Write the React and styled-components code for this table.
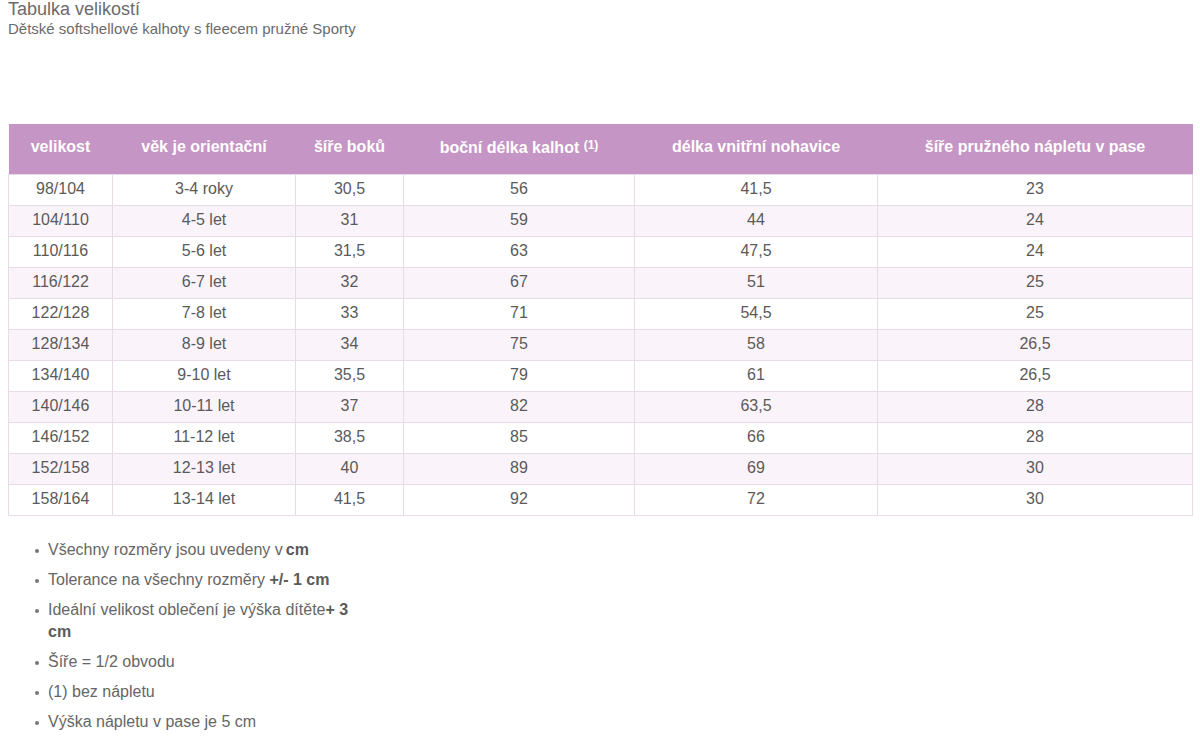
import { createGlobalStyle, styled } from "styled-components";

const GlobalStyle = createGlobalStyle`
  body {
    margin: 0;
    padding: 0 8px;
    background: #fff;
    font-family: "Liberation Sans", Arial, sans-serif;
    color: #666;
  }
`;

const Title = styled.h2({
  margin: 0,
  fontSize: "18px",
  fontWeight: "normal",
  lineHeight: "18px",
  color: "#6b6b6b",
});

const Subtitle = styled.p({
  margin: "2px 0 0",
  fontSize: "15px",
  lineHeight: "17px",
  color: "#6b6b6b",
});

const Table = styled.table({
  marginTop: "87px",
  width: "1184px",
  borderCollapse: "collapse",
  tableLayout: "fixed",
  fontSize: "16px",
  color: "#5a5a5a",
});

const Th = styled.th({
  height: "50px",
  padding: "0 0 3px",
  background: "#c595c5",
  color: "#fff",
  fontWeight: "bold",
  textAlign: "center",
  boxSizing: "border-box",
});

const Sup = styled.sup({
  fontSize: "12px",
  verticalAlign: "4px",
  fontWeight: "bold",
});

const Row = styled.tr`
  background: ${(p) => (p.$odd ? "#faf3fa" : "#fff")};
`;

const Td = styled.td({
  height: "31px",
  padding: "0 0 1px",
  textAlign: "center",
  border: "1px solid #e8dbe8",
  boxSizing: "border-box",
});

const Notes = styled.ul({
  margin: "23px 0 0",
  paddingLeft: "40px",
  width: "312px",
  fontSize: "16px",
  lineHeight: "22px",
  color: "#666",
  listStyle: "none",
});

const Note = styled.li`
  position: relative;
  margin-bottom: 8px;
  &::before {
    content: "";
    position: absolute;
    left: -13px;
    top: 10px;
    width: 4px;
    height: 4px;
    border-radius: 50%;
    background: #777;
  }
  b {
    color: #5a5a5a;
  }
`;

const Unit = styled.b({
  marginLeft: "3px",
});

const widths = [104, 183, 108, 231, 243, 315];

const rows = [
  ["98/104", "3-4 roky", "30,5", "56", "41,5", "23"],
  ["104/110", "4-5 let", "31", "59", "44", "24"],
  ["110/116", "5-6 let", "31,5", "63", "47,5", "24"],
  ["116/122", "6-7 let", "32", "67", "51", "25"],
  ["122/128", "7-8 let", "33", "71", "54,5", "25"],
  ["128/134", "8-9 let", "34", "75", "58", "26,5"],
  ["134/140", "9-10 let", "35,5", "79", "61", "26,5"],
  ["140/146", "10-11 let", "37", "82", "63,5", "28"],
  ["146/152", "11-12 let", "38,5", "85", "66", "28"],
  ["152/158", "12-13 let", "40", "89", "69", "30"],
  ["158/164", "13-14 let", "41,5", "92", "72", "30"],
];

export default function App() {
  return (
    <>
      <GlobalStyle />
      <Title>Tabulka velikostí</Title>
      <Subtitle>Dětské softshellové kalhoty s fleecem pružné Sporty</Subtitle>
      <Table>
        <colgroup>
          {widths.map((w, i) => (
            <col key={i} style={{ width: w }} />
          ))}
        </colgroup>
        <thead>
          <tr>
            <Th>velikost</Th>
            <Th>věk je orientační</Th>
            <Th>šíře boků</Th>
            <Th>
              boční délka kalhot <Sup>(1)</Sup>
            </Th>
            <Th>délka vnitřní nohavice</Th>
            <Th>šíře pružného nápletu v pase</Th>
          </tr>
        </thead>
        <tbody>
          {rows.map((r, i) => (
            <Row key={i} $odd={i % 2 === 1}>
              {r.map((c, j) => (
                <Td key={j}>{c}</Td>
              ))}
            </Row>
          ))}
        </tbody>
      </Table>
      <Notes>
        <Note>
          Všechny rozměry jsou uvedeny v<Unit>cm</Unit>
        </Note>
        <Note>
          Tolerance na všechny rozměry <b>+/- 1 cm</b>
        </Note>
        <Note>
          Ideální velikost oblečení je výška dítěte<b>+ 3 cm</b>
        </Note>
        <Note>Šíře = 1/2 obvodu</Note>
        <Note>(1) bez nápletu</Note>
        <Note>Výška nápletu v pase je 5 cm</Note>
      </Notes>
    </>
  );
}
